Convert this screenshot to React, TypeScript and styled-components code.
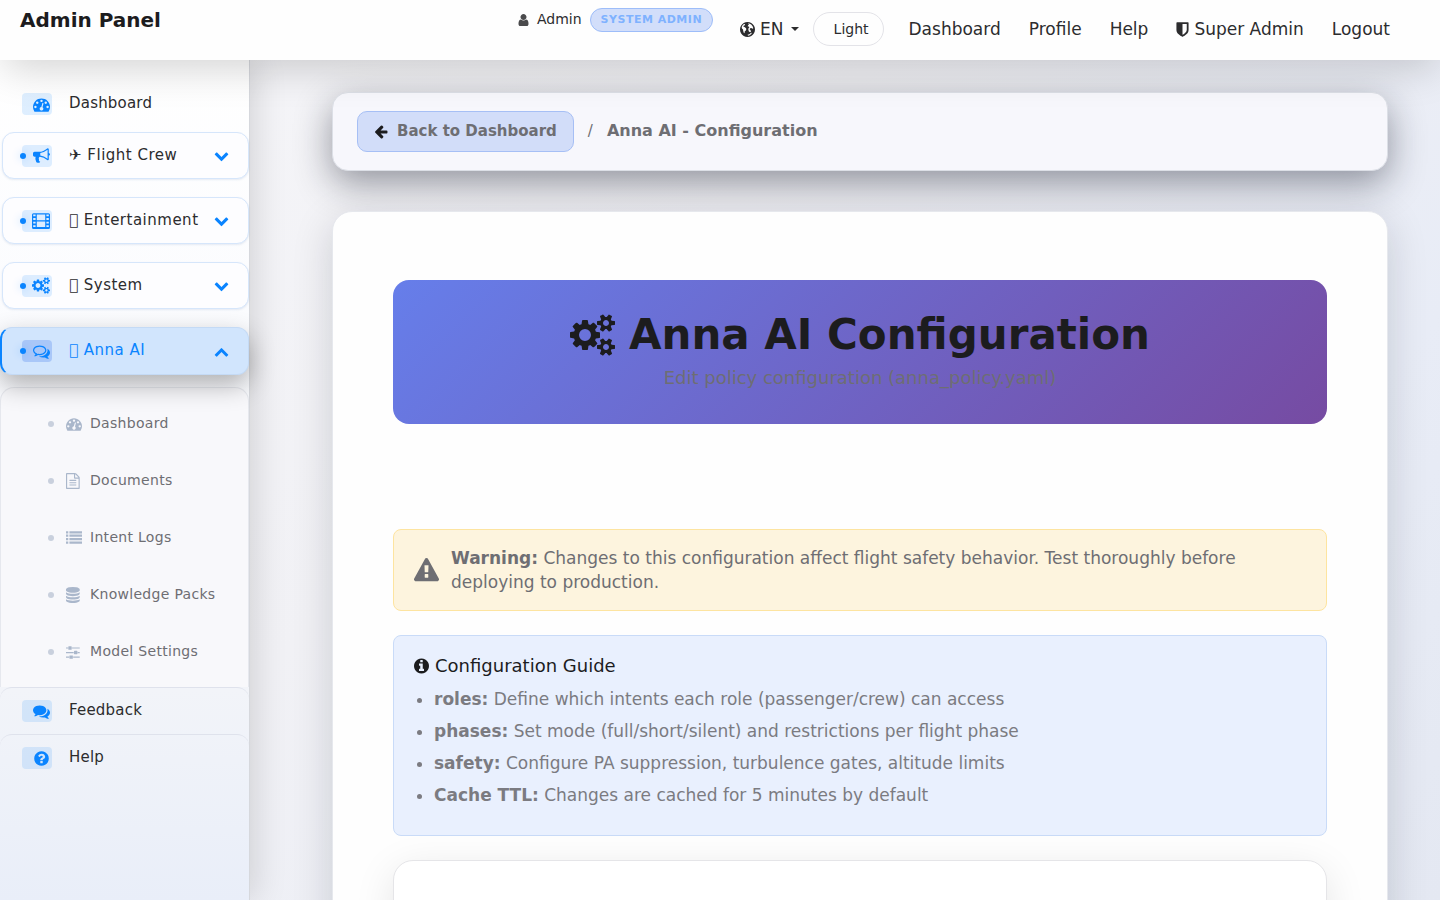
import React from 'react';
import styled, { createGlobalStyle, css } from 'styled-components';

const GlobalStyle = createGlobalStyle`
  *, *::before, *::after { box-sizing: border-box; }
  html, body { margin: 0; padding: 0; }
  body {
    font-family: "DejaVu Sans", sans-serif;
    font-size: 17px;
    line-height: 24px;
    color: #1c1c1e;
    background: #f2f2f7;
  }
  a { color: inherit; text-decoration: none; }
  button { font: inherit; color: inherit; cursor: pointer; }
  ul { margin: 0; padding: 0; }
  h1, h2, p { margin: 0; }
`;

/* ---------- icons ---------- */

const circle =
  'M1664 896q0 209-103 385.5t-279.5 279.5-385.5 103-385.5-103-279.5-279.5-103-385.5 103-385.5 279.5-279.5 385.5-103 385.5 103 279.5 279.5 103 385.5z';

const smallGear =
  'v140q0 16-149 31-12 27-30 52 51 113 51 138 0 4-4 7-122 71-124 71-8 0-46-47t-52-68q-20 2-30 2t-30-2q-14 21-52 68t-46 47q-2 0-124-71-4-3-4-7 0-25 51-138-18-25-30-52-149-15-149-31v-140q0-16 149-31 13-29 30-52-51-113-51-138 0-4 4-7 4-2 35-20t59-34 30-16q8 0 46 46.5t52 67.5q20-2 30-2t30 2q51-71 92-112l6-2q4 0 124 70 4 3 4 7 0 25-51 138 17 23 30 52 149 15 149 31z';

const icons = {
  user: {
    box: '192 0 1408 1792',
    d: 'M1536 1399q0 109-62.5 187t-150.5 78h-854q-88 0-150.5-78t-62.5-187q0-85 8.5-160.5t31.5-152 58.5-131 94-89 134.5-34.5q131 128 313 128t313-128q76 0 134.5 34.5t94 89 58.5 131 31.5 152 8.5 160.5zm-256-887q0 159-112.5 271.5t-271.5 112.5-271.5-112.5-112.5-271.5 112.5-271.5 271.5-112.5 271.5 112.5 112.5 271.5z',
  },
  globe: {
    box: '128 128 1536 1536',
    d:
      circle +
      'M300 640q60-160 190-270l110-40 60 60-70 90-90 40-20 90 110 30 130 90 60 110-50 150-110 90-30 190-80-40-50-170-20-160-110-110zM960 260l180 40 160 110 130 170 60 190-90 40-120-70-110 20-60 120 100 90 40 150-90 60-120-90-60-170 20-150 90-100-60-80-110 10 30-130 90-60z M900 1430l180-60 150-110 120-30-70 130-160 120-170 50z',
  },
  caret: { box: '0 0 8 4', d: 'M0 0h8l-4 4z' },
  shield: {
    box: '256 0 1280 1792',
    d: 'M1344 960v-640h-448v1137q119-63 213-137 235-184 235-360zm192-768v768q0 86-33.5 170.5t-83 150-118 127.5-126.5 103-121 77.5-89.5 49.5-42.5 20q-12 6-26 6t-26-6q-16-7-42.5-20t-89.5-49.5-121-77.5-126.5-103-118-127.5-83-150-33.5-170.5v-768q0-26 19-45t45-19h1152q26 0 45 19t19 45z',
  },
  tachometer: {
    box: '0 0 1792 1792',
    d: 'M384 1152q0-53-37.5-90.5t-90.5-37.5-90.5 37.5-37.5 90.5 37.5 90.5 90.5 37.5 90.5-37.5 37.5-90.5zm192-448q0-53-37.5-90.5t-90.5-37.5-90.5 37.5-37.5 90.5 37.5 90.5 90.5 37.5 90.5-37.5 37.5-90.5zm428 481l101-382q6-26-7.5-48.5t-38.5-29.5-48 6.5-30 39.5l-101 382q-60 5-107 43.5t-63 98.5q-20 77 20 146t117 89 146-20 89-117q16-60-6-117t-72-91zm660-33q0-53-37.5-90.5t-90.5-37.5-90.5 37.5-37.5 90.5 37.5 90.5 90.5 37.5 90.5-37.5 37.5-90.5zm-640-640q0-53-37.5-90.5t-90.5-37.5-90.5 37.5-37.5 90.5 37.5 90.5 90.5 37.5 90.5-37.5 37.5-90.5zm448 192q0-53-37.5-90.5t-90.5-37.5-90.5 37.5-37.5 90.5 37.5 90.5 90.5 37.5 90.5-37.5 37.5-90.5zm320 448q0 261-141 483-19 29-54 29h-1402q-35 0-54-29-141-221-141-483 0-182 71-348t191-286 286-191 348-71 348 71 286 191 191 286 71 348z',
  },
  bullhorn: {
    box: '0 0 1792 1792',
    d: 'M1664 640q53 0 90.5 37.5t37.5 90.5-37.5 90.5-90.5 37.5v384q0 52-38 90t-90 38q-417-347-812-380-58 19-91 66t-31 100.5 40 92.5q-20 33-23 65.5t6 58 33.5 55 48 50 61.5 50.5q-29 58-111.5 83t-168.5 11.5-132-55.5q-7-23-29.5-87.5t-32-94.5-23-89-15-101 3.5-98.5 22-110.5h-122q-66 0-113-47t-47-113v-192q0-66 47-113t113-47h480q435 0 896-384 52 0 90 38t38 90v384zm-128 604v-954q-394 302-768 343v270q377 42 768 341z',
  },
  film: {
    box: '0 0 1920 1792',
    d: 'M160 128h1600a160 160 0 0 1 160 160v1344a160 160 0 0 1-160 160h-1600a160 160 0 0 1-160-160v-1344a160 160 0 0 1 160-160zM128 256v192h256v-192zM128 640v192h256v-192zM128 1024v192h256v-192zM128 1408v192h256v-192zM1536 256v192h256v-192zM1536 640v192h256v-192zM1536 1024v192h256v-192zM1536 1408v192h256v-192zM512 256v608h896v-608zM512 992v608h896v-608z',
  },
  cogs: {
    box: '-64 0 1920 1792',
    d:
      'M832 896q0-106-75-181t-181-75-181 75-75 181 75 181 181 75 181-75 75-181zm768 512q0-52-38-90t-90-38-90 38-38 90q0 53 37.5 90.5t90.5 37.5 90.5-37.5 37.5-90.5zm0-1024q0-52-38-90t-90-38-90 38-38 90q0 53 37.5 90.5t90.5 37.5 90.5-37.5 37.5-90.5zm-384 421v185q0 10-7 19.5t-16 10.5l-155 24q-11 35-32 76 34 48 90 115 7 11 7 20 0 12-7 19-23 30-82.5 89.5t-78.5 59.5q-11 0-21-7l-115-90q-37 19-77 31-11 108-23 155-7 24-30 24h-186q-11 0-20-7.5t-10-17.5l-23-153q-34-10-75-31l-118 89q-7 7-20 7-11 0-21-8-144-133-144-160 0-9 7-19 10-14 41-53t47-61q-23-44-35-82l-152-24q-10-1-17-9.5t-7-19.5v-185q0-10 7-19.5t16-10.5l155-24q11-35 32-76-34-48-90-115-7-11-7-20 0-12 7-20 22-30 82-89t79-59q11 0 21 7l115 90q34-18 77-32 11-108 23-154 7-24 30-24h186q11 0 20 7.5t10 17.5l23 153q34 10 75 31l118-89q8-7 20-7 11 0 21 8 144 133 144 160 0 8-7 19-12 16-42 54t-45 60q23 48 34 82l152 23q10 2 17 10.5t7 19.5z' +
      'M1856 1338' + smallGear + 'M1856 314' + smallGear,
  },
  commentsOutline: {
    box: '0 0 1792 1792',
    d: 'M704 384q-153 0-286 52t-211.5 141-78.5 191q0 82 53 158t149 132l97 56-35 84q34-20 62-39l44-31 53 10q78 14 153 14 153 0 286-52t211.5-141 78.5-191-78.5-191-211.5-141-286-52zm0-128q191 0 353.5 68.5t256.5 186.5 94 257-94 257-256.5 186.5-353.5 68.5q-86 0-176-16-124 88-278 128-36 9-86 16h-3q-11 0-20.5-8t-11.5-21q-1-3-1-6.5t.5-6.5 2-6l2.5-5 3.5-5.5 4-5 4.5-5 4-4.5q5-6 23-25t26-29.5 22.5-29 25-38.5 20.5-44q-124-72-195-177t-71-224q0-139 94-257t256.5-186.5 353.5-68.5zm822 1169q10 24 20.5 44t25 38.5 22.5 29 26 29.5 23 25q1 1 4 4.5t4.5 5 4 5 3.5 5.5l2.5 5 2 6 .5 6.5-1 6.5q-3 14-13 22t-22 7q-50-7-86-16-154-40-278-128-90 16-176 16-271 0-472-132 58 4 88 4 161 0 309-45t264-129q125-92 192-212t67-254q0-77-23-152 129 71 204 178t75 230q0 120-71 224.5t-195 176.5z',
  },
  comments: {
    box: '0 0 1792 1792',
    d: 'M1408 768q0 139-94 257t-256.5 186.5-353.5 68.5q-86 0-176-16-124 88-278 128-36 9-86 16h-3q-11 0-20.5-8t-11.5-21q-1-3-1-6.5t.5-6.5 2-6l2.5-5 3.5-5.5 4-5 4.5-5 4-4.5q5-6 23-25t26-29.5 22.5-29 25-38.5 20.5-44q-124-72-195-177t-71-224q0-139 94-257t256.5-186.5 353.5-68.5 353.5 68.5 256.5 186.5 94 257zm384 256q0 120-71 224.5t-195 176.5q10 24 20.5 44t25 38.5 22.5 29 26 29.5 23 25q1 1 4 4.5t4.5 5 4 5 3.5 5.5l2.5 5 2 6 .5 6.5-1 6.5q-3 14-13 22t-22 7q-50-7-86-16-154-40-278-128-90 16-176 16-271 0-472-132 58 4 88 4 161 0 309-45t264-129q125-92 192-212t67-254q0-77-23-152 129 71 204 178t75 230z',
  },
  question: {
    box: '0 0 1792 1792',
    d:
      'M1024 1376v-192q0-14-9-23t-23-9h-192q-14 0-23 9t-9 23v192q0 14 9 23t23 9h192q14 0 23-9t9-23zm256-672q0-88-55.5-163t-138.5-116-170-41q-243 0-371 213-15 24 8 42l132 100q7 6 19 6 16 0 25-12 53-68 86-92 34-24 86-24 48 0 85.5 26t37.5 59q0 38-20 61t-68 45q-63 28-115.5 86.5t-52.5 125.5v36q0 14 9 23t23 9h192q14 0 23-9t9-23q0-19 21.5-49.5t54.5-49.5q32-18 49-28.5t46-35 44.5-48 28-60.5 12.5-81z' +
      circle,
  },
  info: {
    box: '128 0 1536 1792',
    d:
      'M1152 1376v-160q0-14-9-23t-23-9h-96v-512q0-14-9-23t-23-9h-320q-14 0-23 9t-9 23v160q0 14 9 23t23 9h96v320h-96q-14 0-23 9t-9 23v160q0 14 9 23t23 9h448q14 0 23-9t9-23zm-128-896v-160q0-14-9-23t-23-9h-192q-14 0-23 9t-9 23v160q0 14 9 23t23 9h192q14 0 23-9t9-23z' +
      circle,
  },
  warning: {
    box: '0 0 1792 1792',
    d: 'M1024 1375v-190q0-14-9.5-23.5t-22.5-9.5h-192q-13 0-22.5 9.5t-9.5 23.5v190q0 14 9.5 23.5t22.5 9.5h192q13 0 22.5-9.5t9.5-23.5zm-2-374l18-459q0-12-10-19-13-11-24-11h-220q-11 0-24 11-10 7-10 21l17 457q0 10 10 16.5t24 6.5h185q14 0 23.5-6.5t10.5-16.5zm-14-934l768 1408q35 63-2 126-17 29-46.5 46t-63.5 17h-1536q-34 0-63.5-17t-46.5-46q-37-63-2-126l768-1408q17-31 47-49t65-18 65 18 47 49z',
  },
  chevronDown: {
    box: '0 0 1792 1792',
    d: 'M1683 808l-742 741q-19 19-45 19t-45-19l-742-741q-19-19-19-45.5t19-45.5l166-165q19-19 45-19t45 19l531 531 531-531q19-19 45-19t45 19l166 165q19 19 19 45.5t-19 45.5z',
  },
  chevronUp: {
    box: '0 0 1792 1792',
    d: 'M1683 1331l-166 165q-19 19-45 19t-45-19l-531-531-531 531q-19 19-45 19t-45-19l-166-165q-19-19-19-45.5t19-45.5l742-741q19-19 45-19t45 19l742 741q19 19 19 45.5t-19 45.5z',
  },
  arrowLeft: {
    box: '64 128 1664 1664',
    d: 'M1664 896v128q0 53-32.5 90.5t-84.5 37.5h-704l293 294q38 36 38 90t-38 90l-75 76q-37 37-90 37-52 0-91-37l-651-652q-37-37-37-90 0-52 37-91l651-650q38-38 91-38 52 0 90 38l75 74q38 38 38 91t-38 91l-293 293h704q52 0 84.5 37.5t32.5 90.5z',
  },
  file: {
    box: '128 0 1792 1792',
    d: 'M1596 380q28 28 48 76t20 88v1152q0 40-28 68t-68 28h-1344q-40 0-68-28t-28-68v-1600q0-40 28-68t68-28h896q40 0 88 20t76 48zm-444-244v376h376q-10-29-22-41l-313-313q-12-12-41-22zm384 1528v-1024h-416q-40 0-68-28t-28-68v-416h-768v1536h1280zm-1024-864q0-14 9-23t23-9h704q14 0 23 9t9 23v64q0 14-9 23t-23 9h-704q-14 0-23-9t-9-23v-64zm736 224q14 0 23 9t9 23v64q0 14-9 23t-23 9h-704q-14 0-23-9t-9-23v-64q0-14 9-23t23-9h704zm0 256q14 0 23 9t9 23v64q0 14-9 23t-23 9h-704q-14 0-23-9t-9-23v-64q0-14 9-23t23-9h704z',
  },
  list: {
    box: '0 0 1792 1792',
    d: 'M0 128h256v256h-256zM0 512h256v256h-256zM0 896h256v256h-256zM0 1280h256v256h-256zM384 128h1408v256h-1408zM384 512h1408v256h-1408zM384 896h1408v256h-1408zM384 1280h1408v256h-1408z',
  },
  database: {
    box: '128 0 1792 1792',
    d: 'M896 768q237 0 443-43t325-127v170q0 69-103 128t-280 93.5-385 34.5-385-34.5-280-93.5-103-128v-170q119 84 325 127t443 43zm0 768q237 0 443-43t325-127v170q0 69-103 128t-280 93.5-385 34.5-385-34.5-280-93.5-103-128v-170q119 84 325 127t443 43zm0-384q237 0 443-43t325-127v170q0 69-103 128t-280 93.5-385 34.5-385-34.5-280-93.5-103-128v-170q119 84 325 127t443 43zm0-1152q208 0 385 34.5t280 93.5 103 128v128q0 69-103 128t-280 93.5-385 34.5-385-34.5-280-93.5-103-128v-128q0-69 103-128t280-93.5 385-34.5z',
  },
  sliders: {
    box: '128 0 1792 1792',
    d: 'M480 1408v128h-352v-128h352zm352-128q26 0 45 19t19 45v256q0 26-19 45t-45 19h-256q-26 0-45-19t-19-45v-256q0-26 19-45t45-19h256zm160-384v128h-864v-128h864zm-640-512v128h-224v-128h224zm1312 1024v128h-736v-128h736zm-960-1152q26 0 45 19t19 45v256q0 26-19 45t-45 19h-256q-26 0-45-19t-19-45v-256q0-26 19-45t45-19h256zm640 512q26 0 45 19t19 45v256q0 26-19 45t-45 19h-256q-26 0-45-19t-19-45v-256q0-26 19-45t45-19h256zm320 128v128h-224v-128h224zm0-512v128h-864v-128h864z',
  },
};

type IconName = keyof typeof icons;

const Svg = styled.svg`
  flex: none;
  display: block;
  fill: currentColor;
`;

function Icon({ name, size, width }: { name: IconName; size: number; width?: number }) {
  const { box, d } = icons[name];
  return (
    <Svg viewBox={box} width={width ?? size} height={size} aria-hidden="true">
      <path d={d} fillRule="evenodd" />
    </Svg>
  );
}

/* ---------- shell ---------- */

const Shell = styled.div`
  height: 100vh;
  display: grid;
  grid-template: 60px minmax(0, 1fr) / 250px minmax(0, 1fr);
  overflow: hidden;
  background: linear-gradient(135deg, #f6f6f9 0%, #f1f1f5 40%, #e8ecf6 75%, #e4e8f2 100%);
`;

const Header = styled.header`
  grid-column: 1 / -1;
  z-index: 3;
  display: flex;
  align-items: flex-start;
  padding: 0 36px 0 20px;
  background: #fefefe;
  box-shadow: 0 12px 40px -4px rgba(0, 0, 0, 0.18);
`;

const Brand = styled.a`
  font-size: 20px;
  font-weight: 700;
  line-height: 40px;
`;

const UserInfo = styled.div`
  display: flex;
  align-items: center;
  gap: 8px;
  height: 40px;
  margin-left: auto;
  color: #4a4a4c;
`;

const UserName = styled.span`
  padding-bottom: 2px;
  color: #2c2c2e;
  font-size: 14px;
`;

const Badge = styled.span`
  padding: 0 10px;
  border: 1px solid #9dbdf9;
  border-radius: 12px;
  background: #d2defa;
  color: #7fb2ff;
  font-size: 11px;
  font-weight: 700;
  line-height: 22px;
  letter-spacing: 0.5px;
`;

const Nav = styled.nav`
  display: flex;
  align-items: center;
  height: 58px;
  margin-left: 13px;
  color: #2c2c2e;
`;

const navItem = css`
  display: flex;
  align-items: center;
  gap: 5px;
  padding: 0 14px;
  line-height: 24px;
`;

const NavLink = styled.a`
  ${navItem}
`;

const LanguageButton = styled.button`
  ${navItem}
  border: 0;
  background: none;
  svg:last-child { margin-left: 2px; }
`;

const ThemeButton = styled.button`
  height: 34px;
  margin-right: 11px;
  padding: 0 14px 0 20px;
  border: 1px solid #e3e3e8;
  border-radius: 17px;
  background: #fefefe;
  font-size: 14px;
`;

/* ---------- sidebar ---------- */

const Sidebar = styled.aside`
  z-index: 2;
  padding-top: 20px;
  border-right: 1px solid #d6d8dd;
  background: linear-gradient(180deg, #ffffff 0%, #fafbfe 35%, #f2f4f9 75%, #e9eef9 100%);
  box-shadow: 4px 0 32px rgba(0, 0, 0, 0.14);
`;

const ItemLabel = styled.span`
  flex: 1;
  padding-bottom: 2px;
  white-space: nowrap;
`;

const PlainItem = styled.a<{ $divided?: boolean }>`
  display: flex;
  align-items: center;
  height: 47px;
  padding: 0 19px 0 22px;
  border-radius: 12px 12px 0 0;
  border-top: 1px solid ${(p) => (p.$divided ? '#dfe2ec' : 'transparent')};
  color: #2c2c2e;
  font-size: 15px;
  letter-spacing: 0.2px;
`;

const IconTile = styled.span<{ $active?: boolean }>`
  position: relative;
  display: flex;
  align-items: center;
  justify-content: center;
  width: 30px;
  height: 22px;
  margin-right: 17px;
  padding-left: 8px;
  border-radius: 4px;
  background: ${(p) => (p.$active ? '#a9c7f8' : 'rgba(10, 132, 255, 0.13)')};
  color: #0a84ff;
`;

const Dot = styled.span`
  position: absolute;
  top: 8px;
  left: -2px;
  width: 6px;
  height: 6px;
  border-radius: 50%;
  background: #0a84ff;
  box-shadow: 0 0 8px rgba(10, 132, 255, 0.3);
`;

const Groups = styled.div`
  display: flex;
  flex-direction: column;
  gap: 18px;
  padding-top: 5px;
`;

const GroupButton = styled.button<{ $open?: boolean }>`
  display: flex;
  align-items: center;
  height: 47px;
  margin-left: 2px;
  padding: 0 19px;
  border: 1px solid #d6e6fb;
  border-radius: 12px;
  background: #fdfdff;
  box-shadow: 0 1px 2px rgba(60, 100, 160, 0.12);
  color: #2c2c2e;
  font-size: 15px;
  letter-spacing: 0.5px;
  text-align: left;

  ${(p) =>
    p.$open &&
    css`
      z-index: 1;
      height: 48px;
      margin-left: 0;
      padding-left: 20px;
      border-color: #c4daf5;
      border-left: 2px solid #0a84ff;
      background: #d1e5fd;
      box-shadow: 0 10px 26px rgba(0, 0, 0, 0.3);
      color: #0a84ff;
    `}
`;

const Chevron = styled.span`
  color: #0a84ff;
`;

const SubMenu = styled.ul`
  margin-top: 12px;
  padding: 7px 0;
  list-style: none;
  border: 1px solid #e6e8ee;
  border-bottom: 0;
  border-radius: 14px 14px 0 0;
  background: #f8f8fb;
`;

const SubLink = styled.a`
  display: flex;
  align-items: center;
  height: 57px;
  padding-left: 47px;
  color: #6e6e73;
  font-size: 14px;
  letter-spacing: 0.3px;

  &::before {
    content: "";
    width: 6px;
    height: 6px;
    margin-right: 12px;
    border-radius: 50%;
    background: #c9d0dd;
  }

  svg {
    margin-right: 8px;
    color: #aab7cb;
  }
`;

/* ---------- content ---------- */

const Main = styled.main`
  z-index: 1;
  padding: 32px 52px 32px 82px;
  overflow-y: auto;
  scrollbar-width: none;
`;

const Breadcrumb = styled.nav`
  display: flex;
  align-items: center;
  height: 79px;
  padding: 0 24px;
  border: 1px solid #dcdfe6;
  border-radius: 16px;
  background: #f7f7fc;
  box-shadow: 0 12px 36px rgba(20, 25, 40, 0.44);
  color: #6e6e73;
  font-size: 15px;
`;

const BackLink = styled.a`
  display: flex;
  align-items: center;
  gap: 9px;
  height: 41px;
  padding: 0 16px;
  border: 1px solid #a6bff5;
  border-radius: 10px;
  background: #d2ddf9;
  font-weight: 700;

  svg { color: #1c1c1e; }
`;

const CrumbLabel = styled.span`
  padding-bottom: 2px;
`;

const Separator = styled.span`
  margin: 0 14px;
  padding-bottom: 2px;
`;

const Current = styled.span`
  padding-bottom: 2px;
  font-size: 16px;
  font-weight: 700;
`;

const Panel = styled.section`
  margin-top: 40px;
  padding: 68px 60px;
  border: 1px solid #e6e8ed;
  border-radius: 20px;
  background: #fefefe;
  box-shadow: 0 10px 40px rgba(15, 18, 30, 0.16);
`;

const Hero = styled.div`
  height: 144px;
  padding-top: 30px;
  border-radius: 16px;
  background: linear-gradient(135deg, #667eea 0%, #764ba2 100%);
  text-align: center;
`;

const HeroTitle = styled.h1`
  display: flex;
  align-items: center;
  justify-content: center;
  gap: 14px;
  font-size: 42px;
  font-weight: 700;
  line-height: 50px;
`;

const HeroText = styled.p`
  margin-top: 4px;
  color: #6e6e73;
  font-size: 18px;
  line-height: 28px;
`;

const Notice = styled.div`
  display: flex;
  align-items: center;
  gap: 12px;
  margin-top: 105px;
  padding: 16px 20px;
  border: 1px solid #fde4a0;
  border-radius: 8px;
  background: #fdf4de;
  color: #6e6e73;
`;

const Guide = styled.div`
  margin-top: 24px;
  padding: 18px 20px 24px;
  border: 1px solid #c9dbf8;
  border-radius: 8px;
  background: #e9f0fe;
`;

const GuideTitle = styled.h2`
  display: flex;
  align-items: center;
  gap: 6px;
  font-size: 18px;
  font-weight: 400;
  line-height: 24px;
`;

const GuideList = styled.ul`
  margin-top: 5px;
  padding-left: 20px;
  color: #7b7b81;
  line-height: 32px;
`;

const EditorCard = styled.section`
  min-height: 400px;
  margin-top: 24px;
  border: 1px solid #e5e5e8;
  border-radius: 20px;
  background: #ffffff;
  box-shadow: 0 10px 40px rgba(0, 0, 0, 0.1);
`;

const groups: { icon: IconName; label: string; width: number; open?: boolean }[] = [
  { icon: 'bullhorn', label: '✈ Flight Crew', width: 17 },
  { icon: 'film', label: '\u{F0000} Entertainment', width: 18 },
  { icon: 'cogs', label: '\u{F0000} System', width: 18 },
  { icon: 'commentsOutline', label: '\u{F0000} Anna AI', width: 17, open: true },
];

const subLinks: { icon: IconName; label: string }[] = [
  { icon: 'tachometer', label: 'Dashboard' },
  { icon: 'file', label: 'Documents' },
  { icon: 'list', label: 'Intent Logs' },
  { icon: 'database', label: 'Knowledge Packs' },
  { icon: 'sliders', label: 'Model Settings' },
];

const guideRows = [
  ['roles:', 'Define which intents each role (passenger/crew) can access'],
  ['phases:', 'Set mode (full/short/silent) and restrictions per flight phase'],
  ['safety:', 'Configure PA suppression, turbulence gates, altitude limits'],
  ['Cache TTL:', 'Changes are cached for 5 minutes by default'],
];

export default function App() {
  return (
    <>
      <GlobalStyle />
      <Shell>
        <Header>
          <Brand href="#">Admin Panel</Brand>
          <UserInfo>
            <Icon name="user" size={14} width={11} />
            <UserName>Admin</UserName>
            <Badge>SYSTEM ADMIN</Badge>
          </UserInfo>
          <Nav>
            <LanguageButton type="button">
              <Icon name="globe" size={15} />
              EN
              <Icon name="caret" size={4} width={8} />
            </LanguageButton>
            <ThemeButton type="button">Light</ThemeButton>
            <NavLink href="#">Dashboard</NavLink>
            <NavLink href="#">Profile</NavLink>
            <NavLink href="#">Help</NavLink>
            <NavLink href="#">
              <Icon name="shield" size={17} width={13} />
              Super Admin
            </NavLink>
            <NavLink href="#">Logout</NavLink>
          </Nav>
        </Header>

        <Sidebar>
          <PlainItem href="#">
            <IconTile>
              <Icon name="tachometer" size={17} />
            </IconTile>
            <ItemLabel>Dashboard</ItemLabel>
          </PlainItem>
          <Groups>
            {groups.map((g) => (
              <GroupButton key={g.label} type="button" $open={g.open} aria-expanded={!!g.open}>
                <IconTile $active={g.open}>
                  <Dot />
                  <Icon name={g.icon} size={17} width={g.width} />
                </IconTile>
                <ItemLabel>{g.label}</ItemLabel>
                <Chevron>
                  <Icon name={g.open ? 'chevronUp' : 'chevronDown'} size={15} />
                </Chevron>
              </GroupButton>
            ))}
          </Groups>
          <SubMenu>
            {subLinks.map((s) => (
              <li key={s.label}>
                <SubLink href="#">
                  <Icon name={s.icon} size={16} />
                  <ItemLabel>{s.label}</ItemLabel>
                </SubLink>
              </li>
            ))}
          </SubMenu>
          <PlainItem href="#" $divided>
            <IconTile>
              <Icon name="comments" size={17} />
            </IconTile>
            <ItemLabel>Feedback</ItemLabel>
          </PlainItem>
          <PlainItem href="#" $divided>
            <IconTile>
              <Icon name="question" size={17} />
            </IconTile>
            <ItemLabel>Help</ItemLabel>
          </PlainItem>
        </Sidebar>

        <Main>
          <Breadcrumb aria-label="Breadcrumb">
            <BackLink href="#">
              <Icon name="arrowLeft" size={14} />
              <CrumbLabel>Back to Dashboard</CrumbLabel>
            </BackLink>
            <Separator>/</Separator>
            <Current>Anna AI - Configuration</Current>
          </Breadcrumb>

          <Panel>
            <Hero>
              <HeroTitle>
                <Icon name="cogs" size={42} width={45} />
                Anna AI Configuration
              </HeroTitle>
              <HeroText>Edit policy configuration (anna_policy.yaml)</HeroText>
            </Hero>

            <Notice role="alert">
              <Icon name="warning" size={25} />
              <p>
                <strong>Warning:</strong> Changes to this configuration affect flight safety behavior. Test
                thoroughly before deploying to production.
              </p>
            </Notice>

            <Guide>
              <GuideTitle>
                <Icon name="info" size={18} width={15} />
                Configuration Guide
              </GuideTitle>
              <GuideList>
                {guideRows.map(([term, text]) => (
                  <li key={term}>
                    <strong>{term}</strong> {text}
                  </li>
                ))}
              </GuideList>
            </Guide>

            <EditorCard aria-label="Policy editor" />
          </Panel>
        </Main>
      </Shell>
    </>
  );
}
